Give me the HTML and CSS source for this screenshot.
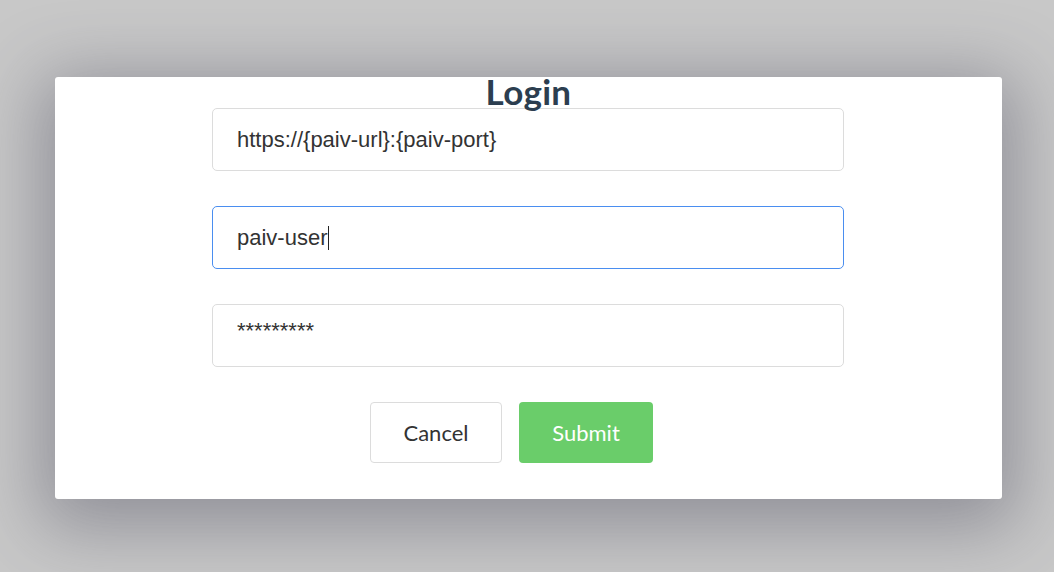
FILE: index.html
```html
<!DOCTYPE html>
<html>
<head>
<meta charset="utf-8">
<link rel="stylesheet" href="styles.css">
</head>
<body>
<div class="backdrop">
  <div class="modal">
    <h1 class="title">Login</h1>
    <div class="form">
      <div class="field">https://{paiv-url}:{paiv-port}</div>
      <div class="field focused">paiv-user<span class="caret"></span></div>
      <div class="field secret">*********</div>
    </div>
    <div class="actions">
      <button class="btn btn-cancel">Cancel</button>
      <button class="btn btn-submit">Submit</button>
    </div>
  </div>
</div>
</body>
</html>
```
FILE: styles.css
```css
html, body {
  margin: 0;
  padding: 0;
  height: 100%;
}
body {
  background: #c8c8c8;
  overflow: hidden;
}
.backdrop {
  padding: 77px 0 0 55px;
}
.modal {
  width: 947px;
  box-sizing: border-box;
  background: #fff;
  border-radius: 3px;
  padding-bottom: 36px;
  box-shadow: 0 14px 70px 14px rgba(60, 60, 80, 0.4);
  display: flex;
  flex-direction: column;
  align-items: center;
}
.title {
  margin: -3px 0 0 0;
  font-family: Lato, "Open Sans", sans-serif;
  font-weight: 700;
  font-size: 35px;
  line-height: 34px;
  letter-spacing: 0.3px;
  color: #2c3e50;
  position: relative;
  z-index: 1;
}
.form {
  display: flex;
  flex-direction: column;
  gap: 35px;
  width: 632px;
  margin-right: 1px;
}
.field {
  height: 63px;
  box-sizing: border-box;
  border: 1px solid #dcdcdc;
  border-radius: 5px;
  padding: 0 24px;
  display: flex;
  align-items: center;
  font-family: "Liberation Sans", Arial, sans-serif;
  font-size: 22px;
  color: #333;
}
.field.focused {
  border-color: #4a8ef0;
}
.field.secret {
  padding-bottom: 10px;
}
.caret {
  display: inline-block;
  width: 1px;
  height: 24px;
  background: #222;
  margin-left: 1px;
}
.actions {
  display: flex;
  justify-content: center;
  gap: 17px;
  margin-top: 35px;
  width: 100%;
  box-sizing: border-box;
  padding-right: 34px;
}
.btn {
  height: 61px;
  border-radius: 4px;
  font-family: Lato, "Open Sans", sans-serif;
  font-size: 22px;
  cursor: pointer;
}
.btn-cancel {
  width: 132px;
  background: #fff;
  border: 1px solid #dcdcdc;
  color: #333;
}
.btn-submit {
  width: 134px;
  background: #6acd6a;
  border: none;
  color: #fff;
}
```
